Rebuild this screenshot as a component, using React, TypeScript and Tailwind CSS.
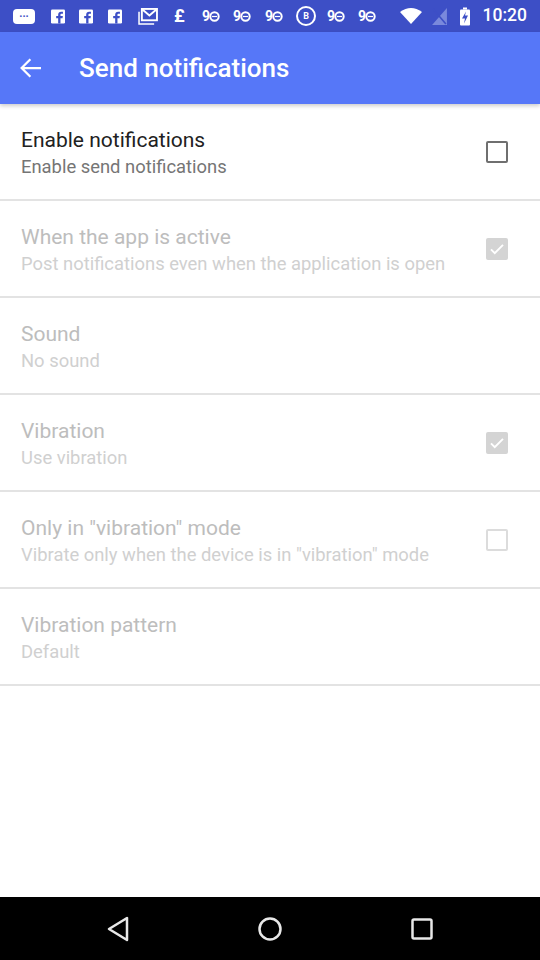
import React from 'react';

type Pref = {
    title: string;
    summary?: string;
    enabled: boolean;
    checkbox?: 'on' | 'off';
};

const prefs: Pref[] = [
    { title: 'Enable notifications', summary: 'Enable send notifications', enabled: true, checkbox: 'off' },
    { title: 'When the app is active', summary: 'Post notifications even when the application is open', enabled: false, checkbox: 'on' },
    { title: 'Sound', summary: 'No sound', enabled: false },
    { title: 'Vibration', summary: 'Use vibration', enabled: false, checkbox: 'on' },
    { title: 'Only in "vibration" mode', summary: 'Vibrate only when the device is in "vibration" mode', enabled: false, checkbox: 'off' },
    { title: 'Vibration pattern', summary: 'Default', enabled: false },
];

const Checkbox: React.FC<{ checked: boolean; enabled: boolean }> = ({ checked, enabled }) => {
    if (checked) {
        return (
            <div className="w-[22px] h-[22px] rounded-[2px] bg-[#d4d4d4] flex items-center justify-center">
                <svg width="18" height="18" viewBox="0 0 24 24">
                    <path d="M4 12.5l5 5L20 6.5" fill="none" stroke="#fff" strokeWidth="2.6" />
                </svg>
            </div>
        );
    }
    return (
        <div
            className={`w-[22px] h-[22px] rounded-[2px] border-2 ${enabled ? 'border-[#6f6f6f]' : 'border-[#dcdcdc]'}`}
        />
    );
};

// facebook logo tile
const FbIcon = () => (
    <svg width="14" height="15" viewBox="0 0 17 17">
        <rect width="17" height="17" rx="1.5" fill="#fff" />
        <path d="M11.5 17V10.5H14L14.4 8H11.5V6.4c0-.8.3-1.3 1.4-1.3h1.6V2.8c-.3 0-1.2-.1-2.2-.1-2.2 0-3.6 1.3-3.6 3.7V8H6.3v2.5h2.4V17z" fill="#3d4fc6" />
    </svg>
);

const NineO = () => (
    <div className="w-[21px] flex items-center text-white">
        <span className="font-bold text-[14px] leading-none">9</span>
        <svg width="11" height="11" viewBox="0 0 11 11" className="-ml-[1px]">
            <circle cx="5.5" cy="5.5" r="4.2" fill="none" stroke="#fff" strokeWidth="2" />
            <path d="M3 5.5h5" stroke="#fff" strokeWidth="1.2" />
        </svg>
    </div>
);

const StatusBar = () => (
    <div className="h-[32px] bg-[#3d4fc6] flex items-center pl-[13px] pr-[13px] text-white">
        <div className="flex items-center">
            <div className="w-[22px] h-[15px] bg-white rounded-[4px] flex items-center justify-center">
                <span className="text-[#3d4fc6] text-[11px] leading-none font-bold -mt-[5px]">...</span>
            </div>
            <div className="ml-[16px]"><FbIcon /></div>
            <div className="ml-[14px]"><FbIcon /></div>
            <div className="ml-[15px]"><FbIcon /></div>
            <svg className="ml-[16px]" width="20" height="17" viewBox="0 0 21 18">
                <rect x="4" y="1" width="16" height="12" fill="none" stroke="#fff" strokeWidth="2" />
                <path d="M4 1l8 7 8-7" fill="none" stroke="#fff" strokeWidth="2" />
                <path d="M1 4v13h16" fill="none" stroke="#fff" strokeWidth="1.6" />
            </svg>
            <span className="ml-[16px] w-[13px] font-bold text-[18px] leading-none">£</span>
            <div className="ml-[15px]"><NineO /></div>
            <div className="ml-[10px]"><NineO /></div>
            <div className="ml-[11px]"><NineO /></div>
            <div className="ml-[10px] w-[20px] h-[20px] rounded-full border-2 border-white flex items-center justify-center">
                <span className="text-[9px] font-bold leading-none">B</span>
            </div>
            <div className="ml-[11px]"><NineO /></div>
            <div className="ml-[10px]"><NineO /></div>
        </div>
        <div className="flex items-center ml-auto">
            <svg width="22" height="16" viewBox="0 0 22 16">
                <path d="M0 4 Q11 -4 22 4 L11 16 Z" fill="#fff" />
            </svg>
            <svg className="ml-[10px]" width="15" height="17" viewBox="0 0 14 16">
                <path d="M14 0 V16 H0 Z" fill="#7a89dc" />
                <path d="M1 1 L13 15" stroke="#3d4fc6" strokeWidth="1.5" />
            </svg>
            <svg className="ml-[13px]" width="10" height="19" viewBox="0 0 10 18">
                <rect x="0" y="2" width="10" height="16" rx="1" fill="#fff" />
                <rect x="3" y="0" width="4" height="2" fill="#fff" />
                <path d="M6 4 L2 11 H5 L4 16 L8 8 H5 Z" fill="#3d4fc6" />
            </svg>
            <span className="text-[17.5px] font-medium leading-none ml-[13px]">10:20</span>
        </div>
    </div>
);

export default function App() {
    return (
        <div
            className="w-[540px] h-[960px] flex flex-col bg-white overflow-hidden"
            style={{ fontFamily: 'Roboto, "Noto Sans", sans-serif' }}
        >
            <StatusBar />
            <div className="h-[72px] bg-[#5677f8] flex items-center shadow-[0_2px_4px_rgba(0,0,0,0.2)] relative z-10">
                <div className="w-[79px] pl-[16px]">
                    <svg width="30" height="30" viewBox="0 0 24 24">
                        <path d="M20 12H4.5M11.5 5l-7 7 7 7" fill="none" stroke="#fff" strokeWidth="1.8" />
                    </svg>
                </div>
                <span className="text-white text-[26px] font-medium">Send notifications</span>
            </div>

            <div className="flex-1">
                {prefs.map((p) => (
                    <div key={p.title} className="border-b-2 border-[#e3e3e3]">
                        <div className="h-[95px] flex items-start pl-[21px] pr-[32px] pt-[24px]">
                            <div className="flex-1 min-w-0">
                                <div
                                    className={`text-[21px] leading-[24px] ${p.enabled ? 'text-[#212121]' : 'text-[#bdbdbd]'}`}
                                >
                                    {p.title}
                                </div>
                                <div
                                    className={`text-[18.4px] leading-[22px] mt-[4px] whitespace-nowrap ${p.enabled ? 'text-[#757575]' : 'text-[#d0d0d0]'}`}
                                >
                                    {p.summary}
                                </div>
                            </div>
                            {p.checkbox && (
                                <div className="mt-[13px] ml-[16px]">
                                    <Checkbox checked={p.checkbox === 'on'} enabled={p.enabled} />
                                </div>
                            )}
                        </div>
                    </div>
                ))}
            </div>

            <div className="h-[63px] bg-black flex items-center">
                <svg className="ml-[107px]" width="22" height="26" viewBox="0 0 22 26">
                    <path d="M20 2 V24 L2 13 Z" fill="none" stroke="#e8e8e8" strokeWidth="2.5" strokeLinejoin="round" />
                </svg>
                <svg className="ml-[129px]" width="24" height="24" viewBox="0 0 24 24">
                    <circle cx="12" cy="12" r="10.5" fill="none" stroke="#e8e8e8" strokeWidth="2.5" />
                </svg>
                <svg className="ml-[129px]" width="22" height="22" viewBox="0 0 22 22">
                    <rect x="1.5" y="1.5" width="19" height="19" rx="1.5" fill="none" stroke="#e8e8e8" strokeWidth="2.5" />
                </svg>
            </div>
        </div>
    );
}
